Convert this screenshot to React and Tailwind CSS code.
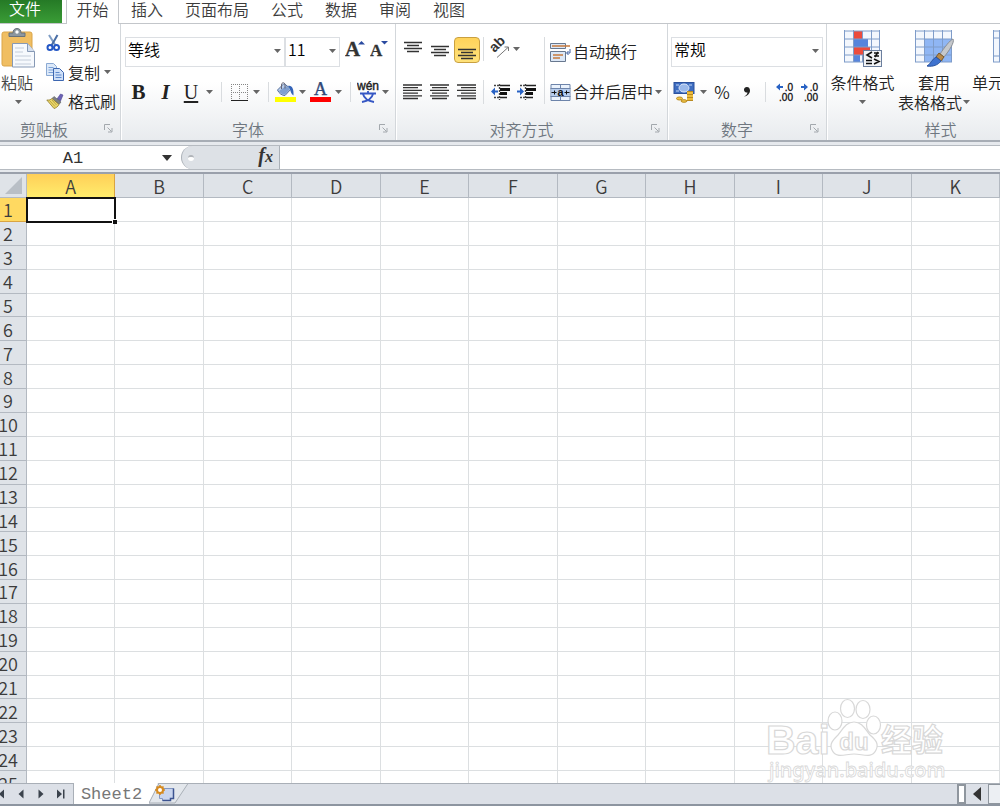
import React from "react";

const COLUMNS = ["A", "B", "C", "D", "E", "F", "G", "H", "I", "J", "K"];
const ROWS = Array.from({ length: 25 }, (_, i) => i + 1);

function Caret({ className = "" }) {
  return (
    <svg width="7" height="4" viewBox="0 0 7 4" className={"shrink-0 " + className} aria-hidden="true">
      <path d="M0 0h7L3.5 4z" fill="#666" />
    </svg>
  );
}

function MenuCaret({ label }) {
  return (
    <button aria-label={label} className="flex h-6 w-3 shrink-0 items-center justify-center">
      <Caret />
    </button>
  );
}

function Tool({ label, className = "w-6", children }) {
  return (
    <button aria-label={label} className={"flex h-6 shrink-0 items-center justify-center " + className}>
      {children}
    </button>
  );
}

function Sep() {
  return <span className="mx-[6px] h-5 w-px shrink-0 bg-[#d9dcdf]" />;
}

function Combo({ label, value, className }) {
  return (
    <div className={"relative shrink-0 " + className}>
      <select
        aria-label={label}
        defaultValue={value}
        className="h-[30px] w-full appearance-none border border-[#dcdfe3] bg-white pb-[6px] pl-[2px] text-base leading-[22px] text-black"
      >
        <option>{value}</option>
      </select>
      <Caret className="pointer-events-none absolute right-1 top-3" />
    </div>
  );
}

function Group({ label, launcher = true, className = "", labelClass = "", children }) {
  return (
    <section aria-label={label} className={"flex shrink-0 flex-col border-r border-[#d3d7db] shadow-[1px_0_0_#fff] " + className}>
      <div className="h-24">{children}</div>
      <div className="flex h-5 items-center pr-1 text-[#6f7780]">
        <span className={"flex-1 pb-[2px] text-center leading-5 " + labelClass}>{label}</span>
        {launcher && (
          <button aria-label={label + "设置"} className="flex h-5 w-4 items-start justify-center pt-1">
            <svg width="9" height="9" viewBox="0 0 9 9" fill="none" stroke="#a3a8ad">
              <path d="M.5 6V.5H6M3.500 3.500l4 4M8 4v4H4" />
            </svg>
          </button>
        )}
      </div>
    </section>
  );
}

function PasteIcon() {
  return (
    <svg width="36" height="40" viewBox="0 0 36 40">
      <rect x="2" y="4" width="30" height="34" rx="2" fill="#f0be62" stroke="#dba548" />
      <path d="M9 8.500V5h4C13 2 14.500.5 17 .5s4 1.500 4 4.500h4v3.500z" fill="#8d979f" stroke="#68727b" />
      <circle cx="17" cy="4" r="1.700" fill="#fff" />
      <path d="M12.500 15.500h15l7 8v15.500h-22z" fill="#f6f9fd" stroke="#8799b5" />
      <path d="M27.500 15.500v8h7" fill="#d5dfed" stroke="#8799b5" />
      <path d="M15 20h9M15 24h8M15 28h16M15 32h16M15 36h16" stroke="#c4cdda" />
    </svg>
  );
}

function CutIcon() {
  return (
    <svg width="16" height="18" viewBox="0 0 16 18" fill="none">
      <path d="M3 1l6.500 10.500" stroke="#7f9dc4" strokeWidth="2" />
      <path d="M11.500 1L5.500 11.500" stroke="#4a6ea5" strokeWidth="2" />
      <ellipse cx="4" cy="13.500" rx="2.500" ry="2.500" stroke="#2457c5" strokeWidth="2" />
      <ellipse cx="10.500" cy="13.500" rx="2.500" ry="2.500" stroke="#2457c5" strokeWidth="2" />
    </svg>
  );
}

function CopyIcon() {
  return (
    <svg width="18" height="18" viewBox="0 0 18 18">
      <path d="M.5.5h7l3 3v9H.5z" fill="#dce9f9" stroke="#8ba9d3" />
      <path d="M2.500 4.500h5M2.500 7h5M2.500 9.500h5" stroke="#7ba0d6" />
      <path d="M7.500 5.500h6l4 4v8h-10z" fill="#cfe0f8" stroke="#3c66b0" />
      <path d="M9.500 9.500h4M9.500 12h6M9.500 14.500h6" stroke="#5c88cc" />
    </svg>
  );
}

function BrushIcon() {
  return (
    <svg width="18" height="16" viewBox="0 0 18 16">
      <path d="M11 6l3.500-5 2.500 1-2.500 6z" fill="#6b62b5" stroke="#4c4592" strokeWidth=".6" />
      <path d="M8 3.500l7 5.500-2 2.500-7-6z" fill="#7c8085" stroke="#55595d" strokeWidth=".6" />
      <path d="M6 5.500l7 6c-1 2-3 3.500-5 4L.8 7c2 .3 4-.3 5.200-1.500z" fill="#ecd869" stroke="#8e7a2c" strokeWidth=".8" />
      <path d="M3.500 7.500l5.500 6M6 7l4.500 5" stroke="#a58e35" strokeWidth=".7" />
    </svg>
  );
}

function GrowIcon({ down }) {
  return (
    <svg width="20" height="24" viewBox="0 0 20 24">
      <text x="0" y="19" fontFamily="Liberation Serif, serif" fontWeight="bold" fontSize={down ? 17 : 21} fill="#333" stroke="#333" strokeWidth=".3">A</text>
      <path d={down ? "M11 4h7l-3.500 3.500z" : "M13 7.500h7L16.500 4z"} fill="#2a4aa0" />
    </svg>
  );
}

function BorderIcon() {
  return (
    <svg width="17" height="17" viewBox="0 0 17 17" fill="none">
      <path d="M.5 0v16M8.500 0v16M16.500 0v16M0 .5h17M0 8.500h17" stroke="#858585" strokeDasharray="1 1" />
      <path d="M0 16.500h17" stroke="#222" />
    </svg>
  );
}

function FillIcon() {
  return (
    <svg width="21" height="20" viewBox="0 0 21 20">
      <path d="M2.500 8L9 1.500 16 7l-6 6.500c-3 0-6-2-7.500-5.500z" fill="#b9cdea" stroke="#56719e" />
      <path d="M4 9l7-5 4 3-5 5.500C7 12.500 5 11 4 9z" fill="#7f9fd0" />
      <path d="M6.500 7V3c0-3 3.500-3 3.500 0v3.500" fill="none" stroke="#667" />
      <path d="M13 4c4-1 6 3 5.500 9.500C16 12 15.500 9 15 7z" fill="#3464b8" />
      <path d="M0 15h21v5H0z" fill="#ff0" />
    </svg>
  );
}

function FontColorIcon() {
  return (
    <svg width="21" height="20" viewBox="0 0 21 20">
      <text x="10.500" y="13" textAnchor="middle" fontFamily="Liberation Serif, serif" fontSize="18" fill="#304878" stroke="#304878" strokeWidth=".4">A</text>
      <path d="M0 15h21v5H0z" fill="#f00" />
    </svg>
  );
}

function PhoneticIcon() {
  return (
    <svg width="22" height="22" viewBox="0 0 22 22">
      <text x="11" y="9" textAnchor="middle" fontFamily="Liberation Sans, sans-serif" fontSize="12" fill="#222" stroke="#222" strokeWidth=".4">wén</text>
      <path d="M3 12.500h16M11 10v3M6 13c1 4 5 7 11 8M16 13c-1 4-5 7-11 8" fill="none" stroke="#3557c4" strokeWidth="1.800" />
    </svg>
  );
}

function LinesIcon({ d, height = 16 }) {
  return (
    <svg width="20" height={height} viewBox={"0 0 20 " + height}>
      <path d={d} stroke="#333" strokeWidth="1.300" />
    </svg>
  );
}

function OrientationIcon() {
  return (
    <svg width="22" height="22" viewBox="0 0 22 22">
      <text transform="translate(6.500 15) rotate(-45)" fontFamily="Liberation Sans, sans-serif" fontWeight="bold" fontSize="14" fill="#333">ab</text>
      <path d="M9 19.500L20 9.500M20.500 13V9h-4" fill="none" stroke="#777" />
    </svg>
  );
}

function IndentIcon({ right }) {
  return (
    <svg width="20" height="16" viewBox="0 0 20 16">
      <path d="M9 1.500h10M9 13.500h7" stroke="#222" strokeWidth="1.500" />
      <path d="M9 5.500h10M9 9.500h7" stroke="#111" strokeWidth="3" />
      <path d="M3 1.500h5M3 13.500h5M8.500 0v16" stroke="#444" strokeDasharray="2 1" strokeWidth="1.300" />
      <path d={right ? "M7 7.500L3 3.500v3H0v2h3v3z" : "M0 7.500l4-4v3h3v2H4v3z"} fill="#2862c4" />
    </svg>
  );
}

function WrapIcon() {
  return (
    <svg width="21" height="19" viewBox="0 0 21 19">
      <path d="M.5.5h15v5H.5zM.5 8.500h15v10H.5z" fill="#dce8f7" stroke="#68788f" />
      <path d="M2 3h18M3 12h10M3 15h7" stroke="#c77a3c" strokeWidth="1.300" />
      <path d="M20 6v4h-3M18.500 8l-2 2 2 2" fill="none" stroke="#3b5da0" />
    </svg>
  );
}

function MergeIcon() {
  return (
    <svg width="21" height="17" viewBox="0 0 20 17">
      <path d="M.5.5h19v16H.5z" fill="#eaf2fc" stroke="#6d84aa" />
      <path d="M1 4h18v9H1z" fill="#b6cdee" />
      <path d="M0 4.500h20M0 12.500h20M10 0v4M10 13v4" stroke="#6d84aa" />
      <text x="10" y="12" textAnchor="middle" fontFamily="Liberation Sans, sans-serif" fontWeight="bold" fontSize="11" fill="#111">a</text>
      <path d="M1 8.500h5M4 6.500v4M19 8.500h-5M16 6.500v4" stroke="#111" />
    </svg>
  );
}

function CurrencyIcon() {
  return (
    <svg width="22" height="21" viewBox="0 0 22 21">
      <rect x="1" y="0.500" width="20" height="11" fill="#3d6cc0" stroke="#2b509c" />
      <ellipse cx="11" cy="6" rx="5" ry="4" fill="#9bb9ea" stroke="#dbe7fa" />
      <path d="M3 3h3M16 3h3M3 9h3" stroke="#c5d7f5" />
      <path d="M14 9h6v10h-6z" fill="#eebd3c" />
      <path d="M14 9.500h6M14 12.500h6M14 15.500h6M14 18.500h6" stroke="#b98a20" />
      <ellipse cx="6.500" cy="16.500" rx="3" ry="1.500" fill="#efc447" stroke="#b98a20" />
      <ellipse cx="11" cy="19" rx="3" ry="1.300" fill="#efc447" stroke="#b98a20" />
    </svg>
  );
}

function DecimalIcon({ right }) {
  return (
    <svg width="20" height="20" viewBox="0 0 20 20">
      <text x="19" y="9" textAnchor="end" fontFamily="Liberation Sans, sans-serif" fontSize="10" fill="#111" stroke="#111" strokeWidth=".3">.0</text>
      <text x="19" y="19" textAnchor="end" fontFamily="Liberation Sans, sans-serif" fontSize="10" fill="#111" stroke="#111" strokeWidth=".3">.00</text>
      <path d={right ? "M9 5L5 1.500V4H2v2h3v2.500z" : "M2 5l4-3.500V4h3v2H6v2.500z"} fill="#2862c4" />
    </svg>
  );
}

function ConditionalIcon() {
  return (
    <svg width="40" height="38" viewBox="0 0 40 38">
      <path d="M1 1h36v31H1z" fill="#f3f7fd" />
      <path d="M10 1h9v8h-9zM10 17h17v8H10z" fill="#ec4b3c" />
      <path d="M10 9h15v8H10zM10 25h7v7h-7z" fill="#5784dc" />
      <path d="M1.500 0v32M10.500 0v32M28.500 0v32M36.500 0v32M1 1h36M1 9h36M1 17h36M1 25h36M1 32h36" stroke="#7f9cc9" fill="none" />
      <path d="M19.500 1v8M19.500 25v7" stroke="#7f9cc9" />
      <rect x="20.500" y="20.500" width="18" height="16" fill="#f2f4f7" stroke="#6b7f9e" />
      <path d="M29 22l-5 3 5 3M23 30.500h6M23 33.500h6M31 23h5M31 26h5M35 22l-3 5M31 29l5 2.500-5 2.500" stroke="#111" strokeWidth="1.600" fill="none" />
    </svg>
  );
}

function TableStyleIcon() {
  return (
    <svg width="40" height="38" viewBox="0 0 40 38">
      <path d="M1 1h37v31H1z" fill="#f3f7fd" />
      <path d="M11 9h27v23H11z" fill="#8fb6f4" />
      <path d="M1.500 0v32M10.500 0v32M19.500 0v32M28.500 0v32M37.500 0v32M1 1h37M1 9h37M1 17h37M1 25h37M1 32h37" stroke="#7f9cc9" fill="none" />
      <path d="M39 9c2 3-4 12-9 18l-4-3C30 18 36 10 39 9z" fill="#c5c8cc" stroke="#8a8e94" />
      <path d="M25 23l5 4-3 4-5-4z" fill="#b88a4b" stroke="#7a5829" />
      <path d="M22 27l5 4c-3 4-8 6-14 5 4-2 5-7 9-9z" fill="#3e72cf" stroke="#2a539f" />
    </svg>
  );
}

function CellStyleIcon() {
  return (
    <svg width="40" height="38" viewBox="0 0 40 38">
      <path d="M1 1h37v31H1z" fill="#f3f7fd" />
      <path d="M7 8h23v18H7z" fill="#8fb6f4" />
      <path d="M1.500 0v32M7.500 0v32M28.500 0v32M37.500 0v32M1 1h37M1 8h37M1 26h37M1 32h37" stroke="#7f9cc9" fill="none" />
    </svg>
  );
}

function RibbonTabs() {
  const tabs = ["插入", "页面布局", "公式", "数据", "审阅", "视图"];
  return (
    <nav className="flex h-6 shrink-0 border-b border-[#c3c6ca] text-[#3c3c3c]">
      <button className="h-[23px] w-[62px] bg-linear-to-b from-[#257a26] to-[#3a9c36] pb-[10px] pr-3 leading-4 text-white">文件</button>
      <button className="ml-1 h-6 w-[53px] border-x border-[#c3c6ca] bg-white pb-[6px] leading-[18px]">开始</button>
      <div className="flex gap-[22px] pl-3">
        {tabs.map((t) => (
          <button key={t} className="h-[18px] leading-[18px]">{t}</button>
        ))}
      </div>
    </nav>
  );
}

function Ribbon() {
  return (
    <div className="flex shrink-0 border-b-2 border-[#a7adb5] bg-linear-to-b from-white from-50% to-[#e8ebee]">
      <Group label="剪贴板" className="w-[121px]" labelClass="pr-3">
        <div className="flex">
          <button className="flex w-9 flex-col items-center pt-1">
            <PasteIcon />
            <span className="mt-1 pr-[2px] leading-5">粘贴</span>
            <Caret className="mt-2" />
          </button>
          <div className="ml-[10px] flex flex-col pt-1 text-[#222]">
            <button className="flex h-[29px] items-center gap-1"><span className="w-[18px]"><CutIcon /></span>剪切</button>
            <button className="flex h-[29px] items-center gap-1"><span className="w-[18px]"><CopyIcon /></span>复制<Caret /></button>
            <button className="flex h-[29px] items-center gap-1"><span className="w-[18px]"><BrushIcon /></span>格式刷</button>
          </div>
        </div>
      </Group>

      <Group label="字体" className="w-[275px]">
        <div className="flex flex-col gap-[13px] pl-1 pt-[13px]">
          <div className="flex h-[30px]">
            <Combo label="字体名称" value="等线" className="w-[160px]" />
            <Combo label="字号" value="11" className="w-[55px]" />
            <Tool label="增大字号" className="ml-[2px] w-[26px]"><GrowIcon /></Tool>
            <Tool label="减小字号" className="w-6"><GrowIcon down /></Tool>
          </div>
          <div className="flex items-center">
            <Tool label="加粗" className="w-[27px]"><span className="font-[Liberation_Serif] text-[21px] font-bold leading-6 text-[#222]">B</span></Tool>
            <Tool label="倾斜" className="w-[27px]"><span className="font-[Liberation_Serif] text-[21px] font-bold italic leading-6 text-[#222]">I</span></Tool>
            <Tool label="下划线"><span className="font-[Liberation_Serif] text-[20px] leading-6 text-[#222] underline underline-offset-2">U</span></Tool>
            <MenuCaret label="下划线选项" />
            <Sep />
            <Tool label="边框" className="w-[22px]"><BorderIcon /></Tool>
            <MenuCaret label="边框选项" />
            <Sep />
            <Tool label="填充颜色" className="w-[21px]"><FillIcon /></Tool>
            <MenuCaret label="填充颜色选项" />
            <Tool label="字体颜色"><FontColorIcon /></Tool>
            <MenuCaret label="字体颜色选项" />
            <Sep />
            <Tool label="拼音" className="w-[22px]"><PhoneticIcon /></Tool>
            <MenuCaret label="拼音选项" />
          </div>
        </div>
      </Group>

      <Group label="对齐方式" className="w-[272px]">
        <div className="flex pl-1 pt-[13px]">
          <div className="flex w-[144px] flex-col gap-[13px]">
            <div className="flex h-[30px] items-start">
              <div className="flex gap-px">
                <Tool label="顶端对齐" className="w-[26px] pb-1"><LinesIcon height={12} d="M1 1.500h18M4 4.500h12M1 7.500h18M4 10.500h12" /></Tool>
                <Tool label="垂直居中" className="w-[26px] pt-1"><LinesIcon height={12} d="M1 1.500h18M4 4.500h12M1 7.500h18M4 10.500h12" /></Tool>
                <button aria-label="底端对齐" className="flex h-[26px] w-[26px] items-end justify-center rounded-sm border border-[#c9a040] bg-linear-to-b from-[#ffd35a] to-[#ffe27a] pb-[2px]">
                  <LinesIcon height={12} d="M1 1.500h18M4 4.500h12M1 7.500h18M4 10.500h12" />
                </button>
              </div>
              <span className="ml-[3px] mr-1 h-6 w-px bg-[#d9dcdf]" />
              <Tool label="方向" className="w-[22px]"><OrientationIcon /></Tool>
              <MenuCaret label="方向选项" />
            </div>
            <div className="flex items-center">
              <div className="flex gap-px">
                <Tool label="左对齐" className="w-[26px]"><LinesIcon d="M0 1h19M0 3.700h15M0 6.400h19M0 9.100h15M0 11.800h19M0 14.500h15" /></Tool>
                <Tool label="居中" className="w-[26px]"><LinesIcon d="M0 1h19M2 3.700h15M0 6.400h19M2 9.100h15M0 11.800h19M2 14.500h15" /></Tool>
                <Tool label="右对齐" className="w-[26px]"><LinesIcon d="M0 1h19M4 3.700h15M0 6.400h19M4 9.100h15M0 11.800h19M4 14.500h15" /></Tool>
              </div>
              <span className="ml-[3px] mr-1 h-6 w-px bg-[#d9dcdf]" />
              <Tool label="减少缩进量" className="w-[26px]"><IndentIcon /></Tool>
              <Tool label="增加缩进量" className="w-[26px]"><IndentIcon right /></Tool>
            </div>
          </div>
          <div className="flex flex-col gap-[13px] border-l border-[#d9dcdf] pl-[5px] text-[#222]">
            <button className="flex h-[30px] items-center gap-[2px]"><WrapIcon /><span className="pb-[2px]">自动换行</span></button>
            <button className="flex h-6 items-center gap-[2px]"><MergeIcon /><span className="pb-[2px]">合并后居中</span><Caret /></button>
          </div>
        </div>
      </Group>

      <Group label="数字" className="w-[159px]">
        <div className="flex flex-col gap-[13px] pl-[3px] pt-[13px]">
          <Combo label="数字格式" value="常规" className="w-[152px]" />
          <div className="flex items-center">
            <Tool label="会计数字格式" className="w-[26px]"><CurrencyIcon /></Tool>
            <MenuCaret label="会计数字格式选项" />
            <Tool label="百分比样式" className="w-[26px] text-[17px] text-[#222]">%</Tool>
            <Tool label="千位分隔样式" className="w-6">
              <svg width="8" height="12" viewBox="0 0 8 12"><path d="M4 1a2.800 2.800 0 1 0 .5 5.500C4.500 8 3 9.500 1 10.500c4-.5 6-3.500 6-6C7 2 5.500 1 4 1z" fill="#222" /></svg>
            </Tool>
            <Sep />
            <Tool label="增加小数位数" className="w-[24px]"><DecimalIcon /></Tool>
            <Tool label="减少小数位数" className="w-[26px]"><DecimalIcon right /></Tool>
          </div>
        </div>
      </Group>

      <Group label="样式" launcher={false} className="w-[232px]">
        <div className="flex pt-[6px] text-[#222]">
          <button className="flex w-[71px] shrink-0 flex-col items-center leading-5">
            <ConditionalIcon />
            <span className="mt-1">条件格式</span>
            <Caret className="mt-2" />
          </button>
          <button className="flex w-[72px] shrink-0 flex-col items-center leading-5">
            <TableStyleIcon />
            <span className="mt-1">套用</span>
            <span className="flex items-center gap-px whitespace-nowrap">表格格式<Caret /></span>
          </button>
          <button className="flex w-[84px] shrink-0 flex-col items-center leading-5">
            <CellStyleIcon />
            <span className="mt-1 whitespace-nowrap">单元格样式</span>
            <Caret className="mt-2" />
          </button>
        </div>
      </Group>
    </div>
  );
}

function FormulaBar() {
  return (
    <div className="shrink-0 border-b-2 border-[#9aa0ab] bg-[#e6e9ed] pb-[2px] pt-[3px]">
      <div className="flex h-[25px] border-y border-[#b6bbc1] bg-white">
        <input aria-label="名称框" defaultValue="A1" className="w-[146px] bg-transparent pt-[2px] text-center font-[Liberation_Mono] text-[17px] text-[#333] outline-none" />
        <button aria-label="名称列表" className="flex w-[35px] items-center justify-center pl-[6px]">
          <svg width="10" height="6" viewBox="0 0 10 6"><path d="M0 0h10L5 6z" fill="#333" /></svg>
        </button>
        <div className="flex w-[99px] items-center justify-between rounded-l-full border-l border-r border-[#abb1b8] bg-[#dde1e6] pl-[6px] pr-1">
          <span className="h-[6px] w-[6px] rounded-full border-t-2 border-[#b0b4b9] bg-white" />
          <button aria-label="插入函数" className="pb-1 pr-[2px] font-[Liberation_Serif] text-[20px] font-bold italic leading-5 text-[#333]">f<span className="text-[16px]">x</span></button>
        </div>
        <input aria-label="编辑栏" className="min-w-0 flex-1 bg-white px-2 outline-none" />
      </div>
    </div>
  );
}

function Watermark() {
  return (
    <svg className="pointer-events-none absolute bottom-0 right-[52px]" width="184" height="88" viewBox="0 0 184 88" aria-hidden="true">
      <g fill="#fff" stroke="#d8d8d8" strokeWidth="1.200">
        <text x="2" y="59" fontFamily="Liberation Sans, sans-serif" fontWeight="bold" fontSize="41">Bai</text>
        <ellipse cx="71" cy="26" rx="7" ry="9" />
        <ellipse cx="83.500" cy="13.500" rx="7" ry="9" />
        <ellipse cx="99" cy="14.500" rx="7" ry="9" />
        <ellipse cx="109.500" cy="30" rx="7" ry="9" />
        <path d="M90 27c8 0 11 7 16 13 6 5 9 9 6 15-4 9-13 4-22 4s-18 5-22-4c-3-6 1-10 6-15 5-6 8-13 16-13z" />
        <text x="90" y="55" textAnchor="middle" fontFamily="Liberation Sans, sans-serif" fontWeight="bold" fontSize="24">du</text>
        <text x="117" y="56" fontFamily="Noto Sans CJK SC, sans-serif" fontWeight="bold" fontSize="31">经验</text>
        <text x="5" y="82" fontFamily="Noto Sans, sans-serif" fontWeight="500" fontSize="20" strokeWidth=".8">jingyan.baidu.com</text>
      </g>
    </svg>
  );
}

function Sheet() {
  return (
    <main className="relative min-h-0 flex-1 overflow-hidden">
      <table className="h-[621px] w-full table-fixed border-separate border-spacing-0 text-lg leading-5 text-[#3c3c3c]">
        <thead>
          <tr className="h-6">
            <th aria-label="全选" className="w-[27px] border-b border-r border-[#b3b9c1] bg-[#dfe3e8] p-0">
              <svg width="17" height="17" viewBox="0 0 17 17" className="ml-auto mr-1"><path d="M17 0v17H0z" fill="#b9bfc6" /></svg>
            </th>
            {COLUMNS.map((c) => (
              <th
                key={c}
                scope="col"
                className={
                  "border-b border-r p-0 font-[350] " +
                  (c === "A" ? "border-[#d9a441] bg-linear-to-b from-[#ffcf58] to-[#ffec6c]" : "border-[#b3b9c1] bg-[#dfe3e8]")
                }
              >
                {c}
              </th>
            ))}
          </tr>
        </thead>
        <tbody>
          {ROWS.map((r) => (
            <tr key={r}>
              <th
                scope="row"
                className={
                  "border-b border-r p-0 font-[350] " +
                  (r === 1 ? "border-[#d9a441] bg-[#ffd961]" : "border-[#b3b9c1] bg-[#dfe3e8]")
                }
              >
                <span className="flex w-4 justify-center">{r}</span>
              </th>
              {COLUMNS.map((c) => (
                <td key={c} className="relative border-b border-r border-[#dcdfe1] p-0">
                  {r === 1 && c === "A" && (
                    <span className="absolute -bottom-[2px] -left-px -right-[2px] -top-px z-10 border-2 border-[#111]">
                      <span className="absolute -bottom-[3px] -right-[3px] h-[5px] w-[5px] border-l border-t border-white bg-[#111]" />
                    </span>
                  )}
                </td>
              ))}
            </tr>
          ))}
        </tbody>
      </table>
      <Watermark />
    </main>
  );
}

function SheetTabs() {
  const nav = [
    { label: "第一张", d: "M8 .5v9L3 5zM1 .5h1.500v9H1z" },
    { label: "上一张", d: "M7.500.5v9L2.500 5z" },
    { label: "下一张", d: "M2.500.5v9l5-4.500z" },
    { label: "最后一张", d: "M1 .5v9L6 5zM7 .5h1.500v9H7z" },
  ];
  return (
    <footer className="flex h-[23px] shrink-0 border-b-2 border-t border-b-[#8d95a0] border-t-[#a9afb7] bg-[#dce0e7]">
      <div className="flex w-[74px] shrink-0 items-center justify-end overflow-hidden border-r border-[#a9afb7] pr-[2px]">
        {nav.map((n) => (
          <button key={n.label} aria-label={n.label} className="flex w-5 shrink-0 justify-center">
            <svg width="10" height="10" viewBox="0 0 10 10"><path d={n.d} fill="#3a424c" /></svg>
          </button>
        ))}
      </div>
      <button className="-mt-px w-[75px] bg-white pt-[2px] font-[Liberation_Mono] text-[17px] leading-[18px] text-[#777]">Sheet2</button>
      <button aria-label="插入工作表" className="-mt-px">
        <svg width="42" height="21" viewBox="0 0 42 21">
          <path d="M0 0h9L0 20z" fill="#fff" />
          <path d="M0 20L10 .5h29L26 20z" fill="#e3e7ec" stroke="#a9afb7" />
          <path d="M10.500 5.500h14v10h-3v2h-8v-2h-3z" fill="#c9d5ee" stroke="#8497c2" />
          <path d="M24.500 5.500v10h-3v2h-8" fill="none" stroke="#3c5390" strokeWidth="1.500" />
          <circle cx="11" cy="7" r="3" fill="#fff" stroke="#d68a1f" strokeWidth="2" />
          <path d="M11 2v2M11 10v2M6 7h2M14 7h2M7.500 3.500l1 1M13.500 4.500l1-1M7.500 10.500l1-1M13.500 9.500l1 1" stroke="#d68a1f" strokeWidth="1.500" />
        </svg>
      </button>
      <div className="ml-auto flex">
        <span className="w-[9px] border-2 border-[#8f969e] bg-white" />
        <button aria-label="向左滚动" className="flex w-[22px] items-center justify-center">
          <svg width="8" height="14" viewBox="0 0 8 14"><path d="M8 0v14L0 7z" fill="#333" /></svg>
        </button>
        <span className="w-3 border border-r-0 border-[#8f969e] bg-[#eceff3]" />
      </div>
    </footer>
  );
}

export default function App() {
  return (
    <div className="flex h-screen flex-col overflow-hidden bg-white font-['Noto_Sans_CJK_SC',sans-serif] text-base font-[350] leading-5 text-[#444]">
      <RibbonTabs />
      <Ribbon />
      <FormulaBar />
      <Sheet />
      <SheetTabs />
    </div>
  );
}
